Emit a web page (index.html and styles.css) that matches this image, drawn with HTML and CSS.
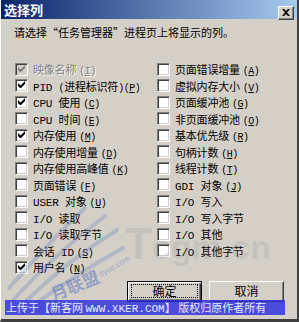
FILE: index.html
```html
<!DOCTYPE html>
<html>
<head>
<meta charset="utf-8">
<link rel="stylesheet" href="styles.css">
</head>
<body>
<div class="win">
  <div class="titlebar">
    <span class="title">选择列</span>
    <span class="close"><svg width="8" height="7" viewBox="0 0 8 7"><path d="M0 0h2l2 2 2-2h2L5 3.5 8 7H6L4 5 2 7H0l3-3.5z" fill="#000"/></svg></span>
  </div>
  <div class="content">
    <p class="prompt">请选择“任务管理器”进程页上将显示的列。</p>
    <div class="cols">
      <div class="col">
        <div class="row disabled"><span class="cb on"></span><span class="lbl">映像名称<span class="acc">(<u>I</u>)</span></span></div>
        <div class="row"><span class="cb on"></span><span class="lbl">PID <span class="par">(</span>进程标识符<span class="par">)</span><span class="acc tight">(<u>P</u>)</span></span></div>
        <div class="row"><span class="cb on"></span><span class="lbl">CPU 使用<span class="acc">(<u>C</u>)</span></span></div>
        <div class="row"><span class="cb"></span><span class="lbl">CPU 时间<span class="acc">(<u>E</u>)</span></span></div>
        <div class="row"><span class="cb on"></span><span class="lbl">内存使用<span class="acc">(<u>M</u>)</span></span></div>
        <div class="row"><span class="cb"></span><span class="lbl">内存使用增量<span class="acc">(<u>D</u>)</span></span></div>
        <div class="row"><span class="cb"></span><span class="lbl">内存使用高峰值<span class="acc">(<u>K</u>)</span></span></div>
        <div class="row"><span class="cb"></span><span class="lbl">页面错误<span class="acc">(<u>F</u>)</span></span></div>
        <div class="row"><span class="cb"></span><span class="lbl">USER 对象<span class="acc">(<u>U</u>)</span></span></div>
        <div class="row"><span class="cb"></span><span class="lbl">I/O 读取</span></div>
        <div class="row"><span class="cb"></span><span class="lbl">I/O 读取字节</span></div>
        <div class="row"><span class="cb"></span><span class="lbl">会话 ID<span class="acc">(<u>S</u>)</span></span></div>
        <div class="row"><span class="cb on"></span><span class="lbl">用户名<span class="acc">(<u>N</u>)</span></span></div>
      </div>
      <div class="col">
        <div class="row"><span class="cb"></span><span class="lbl">页面错误增量<span class="acc">(<u>A</u>)</span></span></div>
        <div class="row"><span class="cb"></span><span class="lbl">虚拟内存大小<span class="acc">(<u>V</u>)</span></span></div>
        <div class="row"><span class="cb"></span><span class="lbl">页面缓冲池<span class="acc">(<u>G</u>)</span></span></div>
        <div class="row"><span class="cb"></span><span class="lbl">非页面缓冲池<span class="acc">(<u>O</u>)</span></span></div>
        <div class="row"><span class="cb"></span><span class="lbl">基本优先级<span class="acc">(<u>R</u>)</span></span></div>
        <div class="row"><span class="cb"></span><span class="lbl">句柄计数<span class="acc">(<u>H</u>)</span></span></div>
        <div class="row"><span class="cb"></span><span class="lbl">线程计数<span class="acc">(<u>T</u>)</span></span></div>
        <div class="row"><span class="cb"></span><span class="lbl">GDI 对象<span class="acc">(<u>J</u>)</span></span></div>
        <div class="row"><span class="cb"></span><span class="lbl">I/O 写入</span></div>
        <div class="row"><span class="cb"></span><span class="lbl">I/O 写入字节</span></div>
        <div class="row"><span class="cb"></span><span class="lbl">I/O 其他</span></div>
        <div class="row"><span class="cb"></span><span class="lbl">I/O 其他字节</span></div>
      </div>
    </div>
    <div class="buttons">
      <div class="btn default"><span class="focus">确定</span></div>
      <div class="btn"><span class="nofocus">取消</span></div>
    </div>
  </div>
  <svg class="wing" width="130" height="110" viewBox="0 0 130 110">
    <g fill="none" stroke="rgba(90,120,190,0.28)" stroke-width="4" stroke-linecap="round">
      <path d="M8 104 C30 80 60 50 100 20"/>
      <path d="M18 108 C40 86 70 60 112 34"/>
      <path d="M30 108 C52 92 82 72 118 52"/>
      <path d="M4 92 C24 70 48 42 80 12"/>
    </g>
  </svg>
  <div class="wm-logo">月联盟</div>
  <div class="wm-url">dyue.com</div>
  <div class="watermark"><span class="wm-big">T</span><span class="wm-c">c</span><span class="wm-gm">gm.cn</span></div>
  <div class="banner">上传于【新客网 <span class="mono">WWW.XKER.COM</span>】 版权归原作者所有</div>
</div>
</body>
</html>
```
FILE: styles.css
```css
html, body {
  margin: 0;
  padding: 0;
}
body {
  width: 299px;
  height: 322px;
  overflow: hidden;
  background: #d4d0c8;
  font-family: "Liberation Mono", "Noto Sans CJK SC", monospace;
  font-size: 11px;
  color: #000;
}
.win {
  position: relative;
  width: 299px;
  height: 322px;
  box-sizing: border-box;
  border-left: 1px solid #ffffff;
  border-right: 2px solid #404040;
  border-bottom: 3px solid #404040;
  background: #d4d0c8;
  overflow: hidden;
}
.titlebar {
  height: 19px;
  background: linear-gradient(to right, #0a246a, #a6caf0);
  display: flex;
  align-items: center;
  justify-content: space-between;
  padding: 0 3px 0 3px;
  box-sizing: border-box;
}
.title {
  color: #fff;
  font-family: "Noto Sans CJK SC", sans-serif;
  font-weight: bold;
  font-size: 13px;
  line-height: 19px;
}
.close {
  width: 16px;
  height: 14px;
  box-sizing: border-box;
  background: #d4d0c8;
  border-top: 1px solid #fff;
  border-left: 1px solid #fff;
  border-right: 1px solid #404040;
  border-bottom: 1px solid #404040;
  box-shadow: inset -1px -1px 0 #808080;
  display: flex;
  align-items: center;
  justify-content: center;
  margin-top: 6px;
}
.content {
  padding: 6px 0 0 0;
}
.prompt {
  margin: 0 0 0 13px;
  line-height: 15px;
  font-family: "Noto Sans CJK SC", sans-serif;
  font-size: 11px;
}
.cols {
  display: grid;
  grid-template-columns: 142px 1fr;
  margin-top: 21px;
  padding-left: 14px;
}
.col {
  display: grid;
  grid-auto-rows: 16.5px;
}
.row {
  display: flex;
  align-items: center;
  gap: 5px;
  white-space: nowrap;
}
.lbl {
  letter-spacing: -0.2px;
}
.acc {
  margin-left: 3px;
  font-size: 10px;
  letter-spacing: -0.5px;
}
.acc.tight {
  margin-left: 0;
}
.par {
  font-size: 10px;
  letter-spacing: -0.5px;
}
.cb {
  width: 13px;
  height: 13px;
  flex: none;
  box-sizing: border-box;
  background: #fff;
  border-top: 1px solid #808080;
  border-left: 1px solid #808080;
  border-right: 1px solid #fff;
  border-bottom: 1px solid #fff;
  box-shadow: inset 1px 1px 0 #404040, inset -1px -1px 0 #d4d0c8;
  position: relative;
}
.cb.on::after {
  content: "";
  position: absolute;
  left: 2px;
  top: 1px;
  width: 7px;
  height: 8px;
  background: url("data:image/svg+xml,%3Csvg xmlns='http://www.w3.org/2000/svg' width='7' height='8' viewBox='0 0 7 8'%3E%3Cpath d='M0 2v3l2 2h1l4-4V0L2.5 4.5z' fill='%23000'/%3E%3C/svg%3E") no-repeat;
}
.disabled .cb {
  background: #d4d0c8;
}
.disabled .cb.on::after {
  background: url("data:image/svg+xml,%3Csvg xmlns='http://www.w3.org/2000/svg' width='7' height='8' viewBox='0 0 7 8'%3E%3Cpath d='M0 2v3l2 2h1l4-4V0L2.5 4.5z' fill='%23808080'/%3E%3C/svg%3E") no-repeat;
}
.disabled .lbl {
  color: #808080;
  text-shadow: 1px 1px 0 #fff;
}
.buttons {
  display: flex;
  gap: 7px;
  margin: 5px 0 0 126px;
}
.btn {
  width: 75px;
  height: 21px;
  box-sizing: border-box;
  background: #d4d0c8;
  border-top: 1px solid #fff;
  border-left: 1px solid #fff;
  border-right: 1px solid #404040;
  border-bottom: 1px solid #404040;
  box-shadow: inset -1px -1px 0 #808080;
  display: flex;
  align-items: center;
  justify-content: center;
  font-family: "Noto Sans CJK SC", sans-serif;
  font-size: 12px;
}
.btn.default {
  border: 1px solid #000;
  box-shadow: inset 1px 1px 0 #fff, inset -1px -1px 0 #404040, inset -2px -2px 0 #808080;
}
.focus {
  width: 67px;
  height: 14px;
  box-sizing: border-box;
  border: 1px dotted #000;
  display: flex;
  align-items: center;
  justify-content: center;
  line-height: 12px;
}
.nofocus {
  line-height: 12px;
}
.wing {
  position: absolute;
  left: 4px;
  top: 196px;
  pointer-events: none;
}
.wm-logo {
  position: absolute;
  left: 48px;
  top: 272px;
  font-family: "Noto Sans CJK SC", sans-serif;
  font-weight: bold;
  font-size: 17px;
  color: rgba(70, 100, 190, 0.45);
  transform: rotate(-22deg);
  white-space: nowrap;
  pointer-events: none;
}
.wm-url {
  position: absolute;
  left: 96px;
  top: 262px;
  font-family: "Liberation Sans", sans-serif;
  font-size: 8px;
  color: rgba(70, 100, 190, 0.4);
  transform: rotate(-30deg);
  white-space: nowrap;
  pointer-events: none;
}
.watermark {
  position: absolute;
  left: 124px;
  top: 222px;
  font-family: "Liberation Sans", sans-serif;
  font-weight: bold;
  color: rgba(120, 120, 120, 0.16);
  white-space: nowrap;
  pointer-events: none;
  line-height: 44px;
}
.wm-big {
  font-size: 44px;
}
.wm-c {
  font-size: 34px;
}
.wm-gm {
  font-size: 34px;
}
.banner {
  position: absolute;
  left: 4px;
  top: 300px;
  width: 280px;
  height: 15px;
  background: rgba(45, 45, 225, 0.82);
  color: #e8ecff;
  font-family: "Noto Sans CJK SC", sans-serif;
  font-size: 11px;
  line-height: 15px;
  white-space: nowrap;
  overflow: hidden;
  padding-left: 1px;
  box-sizing: border-box;
}
.mono {
  font-family: "Liberation Mono", monospace;
  font-size: 11px;
}
```
